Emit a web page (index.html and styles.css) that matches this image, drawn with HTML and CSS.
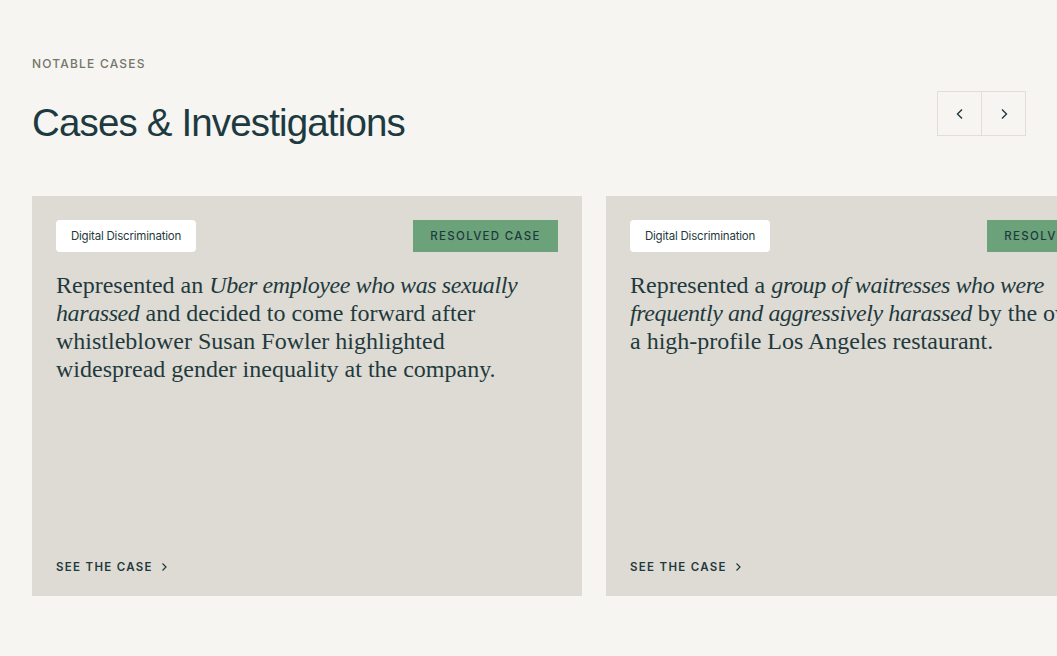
FILE: index.html
```html
<!DOCTYPE html>
<html lang="en">
<head>
<meta charset="utf-8">
<title>Cases & Investigations</title>
<link rel="stylesheet" href="styles.css">
</head>
<body>
<section class="cases">
  <div class="head">
    <div class="titles">
      <p class="eyebrow">NOTABLE CASES</p>
      <h1 class="title">Cases &amp; Investigations</h1>
    </div>
    <div class="nav">
      <button class="nav-btn" aria-label="Previous">
        <svg width="14" height="14" viewBox="0 0 14 14"><path d="M9 2.5 4.5 7 9 11.5" fill="none" stroke="#1f3a3d" stroke-width="1.4"/></svg>
      </button>
      <button class="nav-btn" aria-label="Next">
        <svg width="14" height="14" viewBox="0 0 14 14"><path d="M5 2.5 9.5 7 5 11.5" fill="none" stroke="#1f3a3d" stroke-width="1.4"/></svg>
      </button>
    </div>
  </div>
  <div class="track">
    <article class="card">
      <div class="card-top">
        <span class="tag">Digital Discrimination</span>
        <span class="badge">RESOLVED CASE</span>
      </div>
      <p class="desc">Represented an <em>Uber employee who was sexually harassed</em> and decided to come forward after whistleblower Susan Fowler highlighted widespread gender inequality at the company.</p>
      <a class="more" href="#">SEE THE CASE
        <svg width="10" height="10" viewBox="0 0 10 10"><path d="M3.5 1.5 7 5l-3.5 3.5" fill="none" stroke="#1f3a3d" stroke-width="1.2"/></svg>
      </a>
    </article>
    <article class="card">
      <div class="card-top">
        <span class="tag">Digital Discrimination</span>
        <span class="badge">RESOLVED CASE</span>
      </div>
      <p class="desc">Represented a <em>group of waitresses who were frequently and aggressively harassed</em> by the owner of a high-profile Los Angeles restaurant.</p>
      <a class="more" href="#">SEE THE CASE
        <svg width="10" height="10" viewBox="0 0 10 10"><path d="M3.5 1.5 7 5l-3.5 3.5" fill="none" stroke="#1f3a3d" stroke-width="1.2"/></svg>
      </a>
    </article>
  </div>
</section>
</body>
</html>
```

FILE: styles.css
```css
* { box-sizing: border-box; }
html, body { margin: 0; padding: 0; }
body {
  background: #f6f5f2;
  color: #1f3a3d;
  font-family: "Inter", "Liberation Sans", sans-serif;
  width: 1057px;
  height: 656px;
  overflow: hidden;
}
.cases {
  padding: 56px 0 0 32px;
}
.head {
  display: flex;
  justify-content: space-between;
  align-items: flex-start;
  padding-right: 31px;
}
.eyebrow {
  margin: 0;
  font-size: 12px;
  line-height: 16px;
  letter-spacing: 1.2px;
  color: #73766a;
  font-weight: 500;
}
.title {
  margin: 27px 0 0 0;
  font-family: "Liberation Sans", "Inter", sans-serif;
  font-size: 38.5px;
  line-height: 48px;
  font-weight: 400;
  letter-spacing: -0.85px;
  color: #1d3a40;
}
.nav {
  display: flex;
  margin-top: 35px;
}
.nav-btn {
  width: 45px;
  height: 45px;
  border: 1px solid #e2ded6;
  background: transparent;
  display: flex;
  align-items: center;
  justify-content: center;
  padding: 0;
}
.nav-btn + .nav-btn { margin-left: -1px; }
.track {
  display: flex;
  gap: 24px;
  margin-top: 49px;
}
.card {
  flex: 0 0 550px;
  height: 400px;
  background: #dedad4;
  padding: 24px 24px 22px;
  display: flex;
  flex-direction: column;
}
.card-top {
  display: flex;
  justify-content: space-between;
  align-items: center;
}
.tag {
  background: #fff;
  border-radius: 4px;
  width: 140px;
  height: 32px;
  display: flex;
  align-items: center;
  justify-content: center;
  font-size: 11.5px;
  color: #1f3a3d;
  letter-spacing: -0.2px;
}
.badge {
  background: #6ba27a;
  width: 145px;
  height: 32px;
  display: flex;
  align-items: center;
  justify-content: center;
  font-size: 11.5px;
  font-weight: 500;
  letter-spacing: 1.3px;
  color: #1f3a3d;
}
.desc {
  margin: 19px 0 0 0;
  font-family: "Liberation Serif", serif;
  font-size: 24px;
  line-height: 28px;
  letter-spacing: 0;
  color: #1f3a3d;
}
.desc em { font-style: italic; letter-spacing: -0.4px; }
.more {
  margin-top: auto;
  display: flex;
  align-items: center;
  gap: 6px;
  font-size: 11.5px;
  line-height: 14px;
  font-weight: 600;
  letter-spacing: 1.3px;
  color: #1f3a3d;
  text-decoration: none;
}
```
